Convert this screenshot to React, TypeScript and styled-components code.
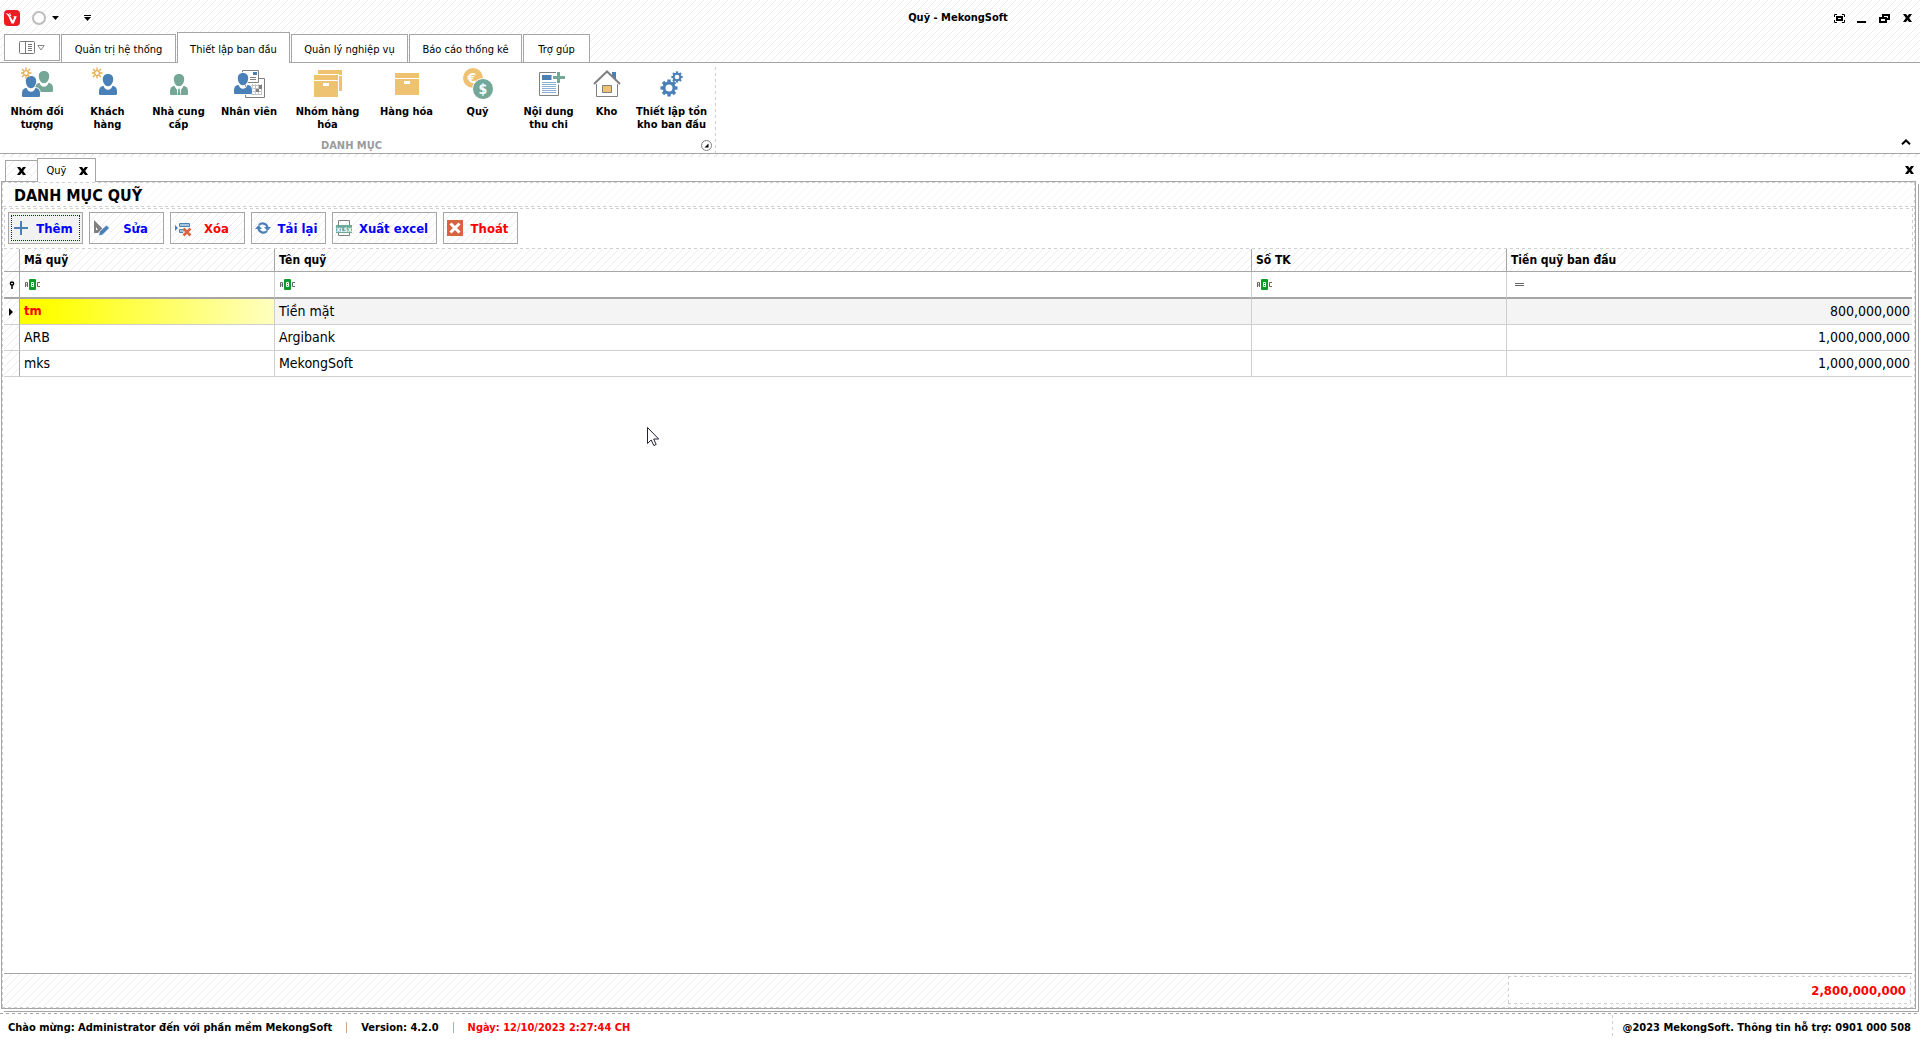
import React from "react";
import styled, { createGlobalStyle, css } from "styled-components";

const line = "#a6a6a6";
const soft = "#cfcfcf";
const blue = "#4a80b8";
const green = "#74a795";
const sand = "#eec270";
const grey = "#808080";

const hatch = css`
  background-color: #fff;
  background-image: linear-gradient(135deg, transparent 44%, #ececec 46%, #ececec 54%, transparent 56%);
  background-size: 8px 8px;
`;

const faintHatch = `linear-gradient(135deg, transparent 44%, #f6f6f6 46%, #f6f6f6 54%, transparent 56%)`;
const dashX = `repeating-linear-gradient(90deg, ${soft} 0 3px, transparent 3px 6px)`;
const dashY = `repeating-linear-gradient(180deg, ${soft} 0 3px, transparent 3px 6px)`;

const dashedFrame = css`
  background-image: ${dashX}, ${dashX}, ${dashY}, ${dashY};
  background-size: 100% 1px, 100% 1px, 1px 100%, 1px 100%;
  background-position: left top, left bottom, left top, right top;
  background-repeat: no-repeat;
`;

const GlobalStyle = createGlobalStyle`
  * { box-sizing: border-box; }
  body { margin: 0; background: #fff; }
  body, button, input {
    font-family: "DejaVu Sans Condensed", "DejaVu Sans", sans-serif;
    color: #000;
  }
  button { margin: 0; padding: 0; border: 0; background: transparent; }
  svg { display: block; flex: none; }
`;

const Window = styled.div`
  display: flex;
  flex-direction: column;
  height: 100vh;
  overflow: hidden;
`;

const TopArea = styled.header`
  ${hatch}
  border-bottom: 1px solid ${line};
`;

const TitleBar = styled.div`
  display: grid;
  grid-template-columns: 1fr auto 1fr;
  align-items: center;
  height: 32px;
  padding: 4px 8px 0 4px;
`;

const QuickAccess = styled.div`
  display: flex;
  align-items: center;
`;

const QuickButton = styled.button<{ $gap: number }>`
  display: flex;
  align-items: center;
  gap: 6px;
  margin-left: ${(p) => p.$gap}px;
`;

const WindowTitle = styled.h1`
  margin: 0;
  font-size: 11px;
  line-height: 16px;
  font-weight: bold;
`;

const WindowControls = styled.div`
  display: flex;
  justify-content: flex-end;
  align-items: center;
  gap: 12px;
`;

const MainTabs = styled.nav`
  display: flex;
  align-items: flex-end;
  gap: 1px;
  height: 30px;
  padding-left: 4px;
`;

const MenuButton = styled.button`
  display: flex;
  align-items: center;
  justify-content: center;
  gap: 2px;
  width: 56px;
  height: 27px;
  margin-bottom: 1px;
  border: 1px solid ${line};
  background: #fff;
`;

const MainTab = styled.button<{ $active?: boolean; $width: number }>`
  width: ${(p) => p.$width}px;
  height: ${(p) => (p.$active ? 31 : 28)}px;
  margin-bottom: ${(p) => (p.$active ? -1 : 0)}px;
  padding-top: 2px;
  border: 1px solid ${line};
  border-bottom: 0;
  background: #fff;
  font-size: 11px;
  white-space: nowrap;
`;

const Ribbon = styled.section`
  display: flex;
  justify-content: space-between;
  height: 91px;
  border-bottom: 1px solid ${line};
`;

const RibbonGroup = styled.div`
  display: flex;
  flex-direction: column;
  justify-content: space-between;
  padding: 4px 2px 0;
  background: ${dashY} right 4px / 1px 100% no-repeat;
`;

const RibbonItems = styled.div`
  display: flex;
`;

const RibbonButton = styled.button<{ $width: number }>`
  display: flex;
  flex-direction: column;
  align-items: center;
  gap: 6px;
  width: ${(p) => p.$width}px;
  font-size: 11px;
  line-height: 13px;
  font-weight: bold;
  white-space: pre;
`;

const GroupFooter = styled.div`
  display: flex;
  align-items: center;
  height: 16px;
  font-size: 11px;
  font-weight: bold;
  color: #9b9b9b;
`;

const GroupCaption = styled.span`
  flex: 1;
  text-align: center;
`;

const Launcher = styled.button`
  margin-right: 2px;
`;

const RibbonCollapse = styled.button`
  align-self: flex-end;
  margin: 0 9px 8px 0;
`;

const DocTabs = styled.div`
  display: flex;
  justify-content: space-between;
  align-items: flex-end;
  height: 27px;
  padding: 0 6px 0 5px;
  background-color: #fff;
  background-image: linear-gradient(135deg, transparent 44%, #e4e4e4 46%, #e4e4e4 54%, transparent 56%);
  background-size: 8px 3px;
  background-repeat: repeat-x;
`;

const TabList = styled.div`
  display: flex;
  align-items: flex-end;
`;

const DocTab = styled.div<{ $active?: boolean }>`
  display: flex;
  align-items: center;
  justify-content: center;
  gap: 13px;
  font-size: 11px;
  border: 1px solid ${line};
  border-bottom: 0;
  ${(p) =>
    p.$active
      ? css`
          z-index: 1;
          width: 59px;
          height: 24px;
          margin-bottom: -1px;
          padding-left: 2px;
          background: #fff;
        `
      : css`
          ${hatch}
          width: 32px;
          height: 21px;
          border-right: 0;
        `}
`;

const PanelClose = styled.button`
  margin-bottom: 7px;
`;

const Panel = styled.main`
  display: flex;
  flex-direction: column;
  flex: 1;
  min-height: 0;
  margin: 0 4px 4px 1px;
  padding: 1px;
  border: 1px solid ${line};
  background-color: #fff;
  box-shadow: 2px 2px 0 #fff, 3px 3px 0 ${line};
  ${dashedFrame}
`;

const PanelTitle = styled.h2`
  height: 24px;
  margin: 0;
  padding-left: 11px;
  font-size: 16px;
  line-height: 25px;
  font-weight: bold;
  background-image: ${dashX}, ${faintHatch};
  background-size: 100% 1px, 8px 8px;
  background-position: left bottom, left top;
  background-repeat: no-repeat, repeat;
`;

const Toolbar = styled.div`
  display: flex;
  gap: 6px;
  height: 41px;
  margin: 1px 1px 0;
  padding: 4px;
  ${dashedFrame}
`;

const ToolButton = styled.button<{ $danger?: boolean; $wide?: boolean; $focused?: boolean }>`
  ${hatch}
  display: flex;
  align-items: center;
  width: ${(p) => (p.$wide ? 105 : 75)}px;
  height: 32px;
  padding: 0 3px;
  border: 1px solid ${line};
  font-size: 13px;
  font-weight: bold;
  color: ${(p) => (p.$danger ? "#f00" : "#00f")};
  white-space: nowrap;
  ${(p) => p.$focused && `background-color: #f2f2f2; outline: 1px dotted #00f; outline-offset: -4px;`}
`;

const ToolLabel = styled.span`
  flex: 1;
  text-align: center;
`;

const GridArea = styled.div`
  flex: 1;
  min-height: 0;
  padding: 0 2px 0 1px;
`;

const Grid = styled.table`
  width: 100%;
  table-layout: fixed;
  border-collapse: separate;
  border-spacing: 0;
  font-size: 14px;
`;

const HeadCell = styled.th`
  ${hatch}
  height: 23px;
  padding: 0 4px;
  border-right: 1px solid ${line};
  border-bottom: 1px solid ${line};
  font-size: 12px;
  line-height: 16px;
  text-align: left;
  &:last-child { border-right: 0; }
`;

const Indicator = styled.td<{ $filter?: boolean }>`
  ${hatch}
  height: ${(p) => (p.$filter ? 27 : 26)}px;
  padding: 0 0 0 5px;
  border-right: 1px solid ${line};
  border-bottom: ${(p) => (p.$filter ? `2px solid ${line}` : `1px solid ${soft}`)};
`;

const FilterCell = styled.td`
  height: 27px;
  padding: 0 4px;
  border-right: 1px solid ${soft};
  border-bottom: 2px solid ${line};
  &:last-child { border-right: 0; }
`;

const FilterBox = styled.div`
  display: flex;
  align-items: center;
  gap: 4px;
`;

const FilterInput = styled.input`
  flex: 1;
  min-width: 0;
  height: 21px;
  padding: 0;
  border: 0;
  outline: 0;
  background: transparent;
  font-size: 14px;
`;

const Cell = styled.td<{ $selected?: boolean; $focused?: boolean; $right?: boolean }>`
  height: 26px;
  padding: 0 4px 2px;
  border-right: 1px solid ${soft};
  border-bottom: 1px solid ${soft};
  line-height: 18px;
  text-align: ${(p) => (p.$right ? "right" : "left")};
  background: ${(p) =>
    p.$focused ? "linear-gradient(90deg, #ff0 10%, #ffffc0)" : p.$selected ? "#f4f4f4" : "#fff"};
  ${(p) => p.$focused && "color: #f00; font-weight: bold; font-size: 13px;"}
  &:last-child { border-right: 0; padding-right: 2px; }
`;

const Summary = styled.div`
  ${hatch}
  display: flex;
  justify-content: flex-end;
  height: 34px;
  margin: 0 2px 0 1px;
  padding: 2px 1px 3px;
  border-top: 1px solid ${line};
`;

const SummaryBox = styled.output`
  width: 403px;
  padding-right: 5px;
  background-color: #fff;
  ${dashedFrame}
  font-size: 13px;
  line-height: 29px;
  font-weight: bold;
  text-align: right;
  color: #f00;
`;

const StatusBar = styled.footer`
  display: flex;
  align-items: center;
  justify-content: space-between;
  height: 26px;
  padding-left: 8px;
  background: repeating-linear-gradient(90deg, ${line} 0 3px, transparent 3px 6px) left top / 100% 1px no-repeat;
  font-size: 11px;
  line-height: 16px;
  font-weight: bold;
`;

const StatusGroup = styled.div`
  display: flex;
  align-items: center;
  gap: 14px;
  padding-top: 3px;
`;

const StatusRule = styled.span`
  width: 1px;
  height: 11px;
  background: #c8a890;
`;

const StatusDate = styled.span`
  color: #f00;
`;

const Support = styled.div`
  align-self: stretch;
  margin-top: 2px;
  padding: 5px 9px 0 11px;
  background: ${dashY} left top / 1px 100% no-repeat;
`;

const Pointer = styled.svg`
  position: absolute;
  left: 647px;
  top: 427px;
`;

const Star = ({ x, y }: { x: number; y: number }) => (
  <g transform={`translate(${x} ${y})`} stroke="#e6ac4c" strokeWidth="1.3" fill="none">
    <circle r="2.4" fill="#fff" />
    <path d="M0-5.5V-3M0 3v2.500M-5.500 0H-3M3 0h2.500M-4-4l1.800 1.800M2.200 2.200L4 4M-4 4l1.800-1.800M2.200-2.200L4-4" />
  </g>
);

const Person = ({ x, y, fill, tie }: { x: number; y: number; fill: string; tie?: boolean }) => (
  <g transform={`translate(${x} ${y})`} fill={fill}>
    <path d="M9 0c3.500 0 5.200 2.200 5.200 5.200 0 3.600-2.200 7-5.200 7s-5.200-3.400-5.200-7C3.800 2.200 5.500 0 9 0z" />
    <path d="M4.500 11.800c.8 2.400 2.400 4 4.500 4s3.700-1.600 4.500-4c3.200.700 4.500 2.400 4.500 5.400v2.300c0 1-.6 1.500-1.500 1.500h-15C.6 21 0 20.500 0 19.500v-2.300c0-3 1.300-4.700 4.500-5.400z" />
    {tie && (
      <>
        <path d="M6.500 13L7.500 21h3l1-8L9 15z" fill="#fff" />
        <path d="M8.300 14.500h1.400l.5 6.500H7.800z" />
      </>
    )}
  </g>
);

const Box = ({ x, y }: { x: number; y: number }) => (
  <g transform={`translate(${x} ${y})`}>
    <path fill={sand} d="M0 0h24v5H0zM0 6h24v16H0z" />
    <path fill="#fff" d="M9 8h6v3H9z" />
  </g>
);

const Gear = ({ x, y, r }: { x: number; y: number; r: number }) => (
  <g transform={`translate(${x} ${y}) scale(${r / 8})`}>
    {[0, 45, 90, 135].map((a) => (
      <rect key={a} x="-1.700" y="-8.500" width="3.400" height="17" fill={blue} transform={`rotate(${a})`} />
    ))}
    <circle r="5" fill="#fff" stroke={blue} strokeWidth="3" />
  </g>
);

const icons: Record<string, React.ReactNode> = {
  group: (
    <>
      <Person x={14} y={4} fill={green} />
      <g stroke="#fff" strokeWidth="1.500" paintOrder="stroke"><Person x={1} y={9} fill={blue} /></g>
      <Star x={5} y={6} />
    </>
  ),
  customer: (<><Person x={7} y={7} fill={blue} /><Star x={5} y={6} /></>),
  supplier: <Person x={7} y={7} fill={green} tie />,
  staff: (
    <>
      <path d="M12.500 11.500h19v19h-19z" fill="#fff" stroke={grey} />
      <path d="M16 18.500h13M16 21.500h13M16 24.500h13M16 27.500h13M19.500 17v11M22.500 17v11M25.500 17v11M28.500 17v11" stroke="#c4c4c4" />
      <path fill={grey} d="M26 18h3v4h-3zM23 22h3v3h-3z" />
      <path d="M9.500 3.500h16v12h-16z" fill="#fff" stroke={grey} />
      <path d="M17 10.500h6M17 12.500h6" stroke={grey} />
      <path fill={blue} d="M20 5h4v3h-4z" />
      <g stroke="#fff" strokeWidth="1.500" paintOrder="stroke"><Person x={1} y={6} fill={blue} /></g>
    </>
  ),
  boxes: (<><path fill={sand} d="M6 3h24v5H6zM27 9h3v15h-3z" /><path d="M1 7h26v23H1z" fill="#fff" /><Box x={2} y={8} /></>),
  box: <Box x={4} y={6} />,
  fund: (
    <>
      <circle cx="11" cy="11" r="10" fill={sand} />
      <circle cx="21" cy="22" r="10.500" fill={green} stroke="#fff" />
      <g fill="#fff" fontFamily="DejaVu Sans Condensed" fontWeight="bold" fontSize="14" textAnchor="middle">
        <text x="10" y="16">€</text>
        <text x="21" y="27">$</text>
      </g>
    </>
  ),
  note: (
    <>
      <path d="M6.500 5.500h19v23h-19z" fill="#fff" stroke={grey} />
      <path fill={blue} d="M9 8h10v5H9z" />
      <path d="M9 15.500h14M9 17.500h14M9 19.500h14M9 21.500h14M9 23.500h14M9 25.500h14" stroke="#8db0d4" />
      <path d="M25.500 3.500v14M18.500 10.500h14" stroke="#fff" strokeWidth="5" />
      <path d="M25.500 5v11M20 10.500h12" stroke={green} strokeWidth="3" />
    </>
  ),
  house: (
    <>
      <path fill={blue} d="M21 5h4v8l-4-4z" />
      <path d="M5.500 17v12.500h21V17" fill="none" stroke={grey} />
      <path d="M3 17L16 4.500 29 17" fill="none" stroke={grey} strokeWidth="2" />
      <path d="M11.500 18.500h9v7h-9z" fill={sand} stroke={grey} />
    </>
  ),
  gears: (<><Gear x={13} y={21} r={8} /><Gear x={21} y={10} r={5.3} /></>),
};

const RibbonIcon = ({ name }: { name: string }) => (
  <svg width="32" height="32" viewBox="0 0 32 32">{icons[name]}</svg>
);

const Cross = () => (
  <svg width="9" height="8" viewBox="0 0 9 8">
    <path d="M0 0h3l1.500 2L6 0h3L6.200 4 9 8H6L4.500 6 3 8H0l2.800-4z" />
  </svg>
);

const toolIcons: Record<string, React.ReactNode> = {
  add: <path d="M9 5v14M2 12h14" stroke={blue} strokeWidth="2" />,
  edit: (
    <>
      <path d="M1 4l9 9-5 4H1zM3 11v3h2z" fill={grey} fillRule="evenodd" />
      <path d="M5.500 20l1-4.500L13.500 9l3 3-7 7z" fill={blue} stroke="#fff" strokeWidth=".8" />
    </>
  ),
  remove: (
    <>
      <path d="M1 9l3 3-3 3z" fill={blue} />
      <path d="M5.500 7.500h10v3h-10zM12 13.500H5.500v3H9" fill="#a9c4e0" stroke={blue} />
      <path d="M9.500 12.500l7 7M16.500 12.500l-7 7" stroke="#d9623f" strokeWidth="2.500" />
    </>
  ),
  reload: (
    <>
      <path d="M4 9a5 5 0 0 1 8.500 2.500M3.500 12.500A5 5 0 0 0 12 15" fill="none" stroke={blue} strokeWidth="2.200" />
      <path d="M9 11h7l-3.500 4zM0 13h7l-3.500-4z" fill={blue} />
    </>
  ),
  excel: (
    <>
      <path d="M2.500 9V4.500h11V9M2.500 17v2.500h11V17" fill="none" stroke={grey} />
      <path d="M0 9h16v8H0z" fill={green} />
      <text x="8" y="15.500" fill="#fff" fontFamily="DejaVu Sans Condensed" fontWeight="bold" fontSize="6" textAnchor="middle">XLSX</text>
    </>
  ),
  exit: (
    <>
      <path d="M0 4h16v16H0z" fill="#d9623f" />
      <path d="M3.500 7.500l9 9M12.500 7.500l-9 9" stroke="#fff" strokeWidth="3" />
    </>
  ),
};

const ToolIcon = ({ name }: { name: string }) => (
  <svg width="18" height="24" viewBox="0 0 18 24">{toolIcons[name]}</svg>
);

const AbcIcon = () => (
  <svg width="17" height="13" viewBox="0 0 17 13">
    <rect x="5" y="1" width="7" height="11" rx="1" fill="#0a9e28" />
    <path d="M1.500 9V4.500h2V9M1.500 7h2M16 4.500h-2.500v4H16" fill="none" stroke="#666" />
    <path d="M7.500 4.500h2v4h-2zM7.500 6.500h2" fill="none" stroke="#fff" />
  </svg>
);

const EqualIcon = () => (
  <svg width="17" height="13" viewBox="0 0 17 13">
    <path d="M4 5.500h9M4 7.500h9" stroke="#666" />
  </svg>
);

const tabs = [
  { label: "Quản trị hệ thống", width: 115 },
  { label: "Thiết lập ban đầu", width: 113, active: true },
  { label: "Quản lý nghiệp vụ", width: 117 },
  { label: "Báo cáo thống kê", width: 113 },
  { label: "Trợ gúp", width: 67 },
];

const ribbonItems = [
  { label: "Nhóm đối\ntượng", icon: "group", width: 70 },
  { label: "Khách\nhàng", icon: "customer", width: 71 },
  { label: "Nhà cung\ncấp", icon: "supplier", width: 71 },
  { label: "Nhân viên", icon: "staff", width: 70 },
  { label: "Nhóm hàng\nhóa", icon: "boxes", width: 87 },
  { label: "Hàng hóa", icon: "box", width: 71 },
  { label: "Quỹ", icon: "fund", width: 71 },
  { label: "Nội dung\nthu chi", icon: "note", width: 71 },
  { label: "Kho", icon: "house", width: 45 },
  { label: "Thiết lập tồn\nkho ban đầu", icon: "gears", width: 85 },
];

const tools = [
  { label: "Thêm", icon: "add", focused: true },
  { label: "Sửa", icon: "edit" },
  { label: "Xóa", icon: "remove", danger: true },
  { label: "Tải lại", icon: "reload" },
  { label: "Xuất excel", icon: "excel", wide: true },
  { label: "Thoát", icon: "exit", danger: true },
];

const columns = ["Mã quỹ", "Tên quỹ", "Số TK", "Tiền quỹ ban đầu"];

const funds = [
  { code: "tm", name: "Tiền mặt", account: "", opening: 800000000 },
  { code: "ARB", name: "Argibank", account: "", opening: 1000000000 },
  { code: "mks", name: "MekongSoft", account: "", opening: 1000000000 },
];

const money = (n: number) => n.toLocaleString("en-US");

export default function App() {
  return (
    <Window>
      <GlobalStyle />
      <TopArea>
        <TitleBar>
          <QuickAccess>
            <svg width="16" height="16" viewBox="0 0 16 16">
              <rect width="16" height="16" rx="4" fill="#ed1c24" />
              <path d="M1.500 3L5 4.200 8.800 10.500l1.400-3.500-1.400-.8h4L9.800 13.500H7.500L4.300 6z" fill="#fff" />
              <path d="M5.500 3l1.300 3" stroke="#fff" />
            </svg>
            <QuickButton $gap={12} aria-label="Giao diện">
              <svg width="14" height="14" viewBox="0 0 14 14">
                <circle cx="7" cy="7" r="6" fill="#fff" stroke="#bdbdbd" strokeWidth="2" />
              </svg>
              <svg width="7" height="4" viewBox="0 0 7 4"><path d="M0 0h7L3.500 4z" /></svg>
            </QuickButton>
            <QuickButton $gap={25} aria-label="Tùy chỉnh">
              <svg width="7" height="6" viewBox="0 0 7 6"><path d="M0 0h7v1H0zM0 2h7L3.500 6z" /></svg>
            </QuickButton>
          </QuickAccess>
          <WindowTitle>Quỹ - MekongSoft</WindowTitle>
          <WindowControls>
            <button aria-label="Toàn màn hình">
              <svg width="11" height="9" viewBox="0 0 11 9">
                <path d="M3 .5H.5V3M8 .5h2.500V3M3 8.500H.500V6M8 8.500h2.500V6" fill="none" stroke="#000" />
                <path d="M3 3h5v3H3z" fill="none" stroke="#000" strokeWidth="2" />
              </svg>
            </button>
            <button aria-label="Thu nhỏ">
              <svg width="10" height="9" viewBox="0 0 10 9"><path d="M0 7h9v2H0z" /></svg>
            </button>
            <button aria-label="Khôi phục">
              <svg width="12" height="9" viewBox="0 0 12 9">
                <path d="M4 3V1h6v4H8M1 4h6v4H1z" fill="none" stroke="#000" strokeWidth="2" />
              </svg>
            </button>
            <button aria-label="Đóng"><Cross /></button>
          </WindowControls>
        </TitleBar>
        <MainTabs>
          <MenuButton aria-label="Trình đơn">
            <svg width="16" height="13" viewBox="0 0 16 13" fill="none" stroke="#777">
              <rect x=".5" y=".5" width="15" height="12" rx="1" />
              <path d="M6.500 1v11M9 3.500h4M9 5.500h4M9 7.500h4M9 9.500h4" />
            </svg>
            <svg width="8" height="6" viewBox="0 0 8 6"><path d="M.8.500h6.400L4 5z" fill="none" stroke="#888" /></svg>
          </MenuButton>
          {tabs.map((t) => (
            <MainTab key={t.label} $width={t.width} $active={t.active}>{t.label}</MainTab>
          ))}
        </MainTabs>
      </TopArea>

      <Ribbon>
        <RibbonGroup>
          <RibbonItems>
            {ribbonItems.map((r) => (
              <RibbonButton key={r.icon} $width={r.width}>
                <RibbonIcon name={r.icon} />
                {r.label}
              </RibbonButton>
            ))}
          </RibbonItems>
          <GroupFooter>
            <GroupCaption>DANH MỤC</GroupCaption>
            <Launcher aria-label="Mở rộng nhóm">
              <svg width="11" height="11" viewBox="0 0 11 11">
                <circle cx="5.500" cy="5.500" r="5" fill="#fff" stroke={grey} />
                <path d="M7.500 3.500v4h-4z" />
              </svg>
            </Launcher>
          </GroupFooter>
        </RibbonGroup>
        <RibbonCollapse aria-label="Thu gọn">
          <svg width="10" height="6" viewBox="0 0 10 6"><path d="M1 5.300L5 1.500l4 3.800" fill="none" stroke="#000" strokeWidth="2" /></svg>
        </RibbonCollapse>
      </Ribbon>

      <DocTabs>
        <TabList>
          <DocTab><button aria-label="Đóng thẻ"><Cross /></button></DocTab>
          <DocTab $active>
            Quỹ
            <button aria-label="Đóng thẻ Quỹ"><Cross /></button>
          </DocTab>
        </TabList>
        <PanelClose aria-label="Đóng tất cả"><Cross /></PanelClose>
      </DocTabs>

      <Panel>
        <PanelTitle>DANH MỤC QUỸ</PanelTitle>
        <Toolbar>
          {tools.map((t) => (
            <ToolButton key={t.icon} $danger={t.danger} $wide={t.wide} $focused={t.focused}>
              <ToolIcon name={t.icon} />
              <ToolLabel>{t.label}</ToolLabel>
            </ToolButton>
          ))}
        </Toolbar>
        <GridArea>
          <Grid>
            <colgroup>
              <col style={{ width: 16 }} />
              <col style={{ width: 255 }} />
              <col />
              <col style={{ width: 255 }} />
              <col style={{ width: 405 }} />
            </colgroup>
            <thead>
              <tr>
                <HeadCell />
                {columns.map((c) => <HeadCell key={c} scope="col">{c}</HeadCell>)}
              </tr>
            </thead>
            <tbody>
              <tr>
                <Indicator $filter>
                  <svg width="6" height="8" viewBox="0 0 6 8">
                    <circle cx="3" cy="2.500" r="1.600" fill="none" stroke="#000" strokeWidth="1.500" />
                    <path d="M3 4v4" stroke="#000" strokeWidth="1.500" />
                  </svg>
                </Indicator>
                {columns.map((c, i) => (
                  <FilterCell key={c}>
                    <FilterBox>
                      <button aria-label={`Kiểu lọc ${c}`}>{i === 3 ? <EqualIcon /> : <AbcIcon />}</button>
                      <FilterInput aria-label={`Lọc ${c}`} />
                    </FilterBox>
                  </FilterCell>
                ))}
              </tr>
              {funds.map((f, i) => (
                <tr key={f.code}>
                  <Indicator>
                    {i === 0 && <svg width="5" height="8" viewBox="0 0 5 8"><path d="M0 0l4 4-4 4z" /></svg>}
                  </Indicator>
                  <Cell $focused={i === 0}>{f.code}</Cell>
                  <Cell $selected={i === 0}>{f.name}</Cell>
                  <Cell $selected={i === 0}>{f.account}</Cell>
                  <Cell $selected={i === 0} $right>{money(f.opening)}</Cell>
                </tr>
              ))}
            </tbody>
          </Grid>
        </GridArea>
        <Summary>
          <SummaryBox>{money(funds.reduce((s, f) => s + f.opening, 0))}</SummaryBox>
        </Summary>
      </Panel>

      <StatusBar>
        <StatusGroup>
          <span>Chào mừng: Administrator đến với phần mềm MekongSoft</span>
          <StatusRule />
          <span>Version: 4.2.0</span>
          <StatusRule />
          <StatusDate>Ngày: 12/10/2023 2:27:44 CH</StatusDate>
        </StatusGroup>
        <Support>@2023 MekongSoft. Thông tin hỗ trợ: 0901 000 508</Support>
      </StatusBar>

      <Pointer width="13" height="20" viewBox="0 0 13 20">
        <path d="M.5.500v16l3.700-3.500 2.600 5.500 2.400-1-2.500-5.500h5z" fill="#fff" stroke="#223" />
      </Pointer>
    </Window>
  );
}
